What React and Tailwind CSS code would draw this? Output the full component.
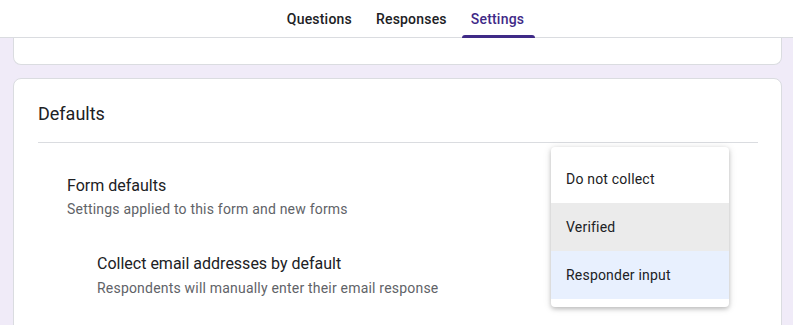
import React from "react";

const tabs = ["Questions", "Responses", "Settings"];
const options = [
  { label: "Do not collect", bg: "bg-white" },
  { label: "Verified", bg: "bg-[#ebebeb]" },
  { label: "Responder input", bg: "bg-[#e8f0fe]" },
];

export default function App() {
  return (
    <div
      className="relative h-[325px] w-[793px] overflow-hidden bg-[#f0ebf8]"
      style={{ fontFamily: "Roboto, 'Liberation Sans', sans-serif" }}
    >
      {/* top tab bar */}
      <div className="flex h-[38px] justify-center border-b border-[#dadce0] bg-white">
        <div className="ml-[18px] flex h-full items-stretch">
          {tabs.map((t) => {
            const active = t === "Settings";
            return (
              <div key={t} className="relative flex items-center px-[12px] pt-[2px]">
                <span
                  className={
                    active
                      ? "text-[14px] font-medium tracking-[0.2px] text-[#3f2a87]"
                      : "text-[14px] font-medium tracking-[0.2px] text-[#202124]"
                  }
                >
                  {t}
                </span>
                {active && (
                  <div className="absolute bottom-[-1px] left-[3px] right-[1px] h-[3px] rounded-t-[3px] bg-[#3f2a87]" />
                )}
              </div>
            );
          })}
        </div>
      </div>

      <div className="pl-[13px] pr-[11px]">
        {/* previous card, scrolled off the top */}
        <div className="h-[27px] rounded-b-[8px] border border-t-0 border-[#dadce0] bg-white" />

        {/* Defaults card */}
        <div className="mt-[13px] h-[300px] rounded-[8px] border border-[#dadce0] bg-white pl-[24px] pr-[23px] pt-[23px]">
          <h2 className="text-[18px] leading-[24px] text-[#202124]">Defaults</h2>
          <div className="mt-[16px] h-px bg-[#dadce0]" />

          <div className="pl-[29px] pt-[31px]">
            <div className="text-[16px] leading-[24px] text-[#202124]">Form defaults</div>
            <div className="mt-[1px] text-[14px] leading-[20px] tracking-[0.2px] text-[#5f6368]">
              Settings applied to this form and new forms
            </div>

            <div className="pl-[30px] pt-[33px]">
              <div className="text-[16px] leading-[24px] text-[#202124]">
                Collect email addresses by default
              </div>
              <div className="mt-[2px] text-[14px] leading-[20px] tracking-[0.2px] text-[#5f6368]">
                Respondents will manually enter their email response
              </div>
            </div>
          </div>
        </div>
      </div>

      {/* open select menu */}
      <div className="absolute left-[551px] top-[147px] w-[178px] rounded-[4px] bg-white py-[8px] shadow-[0_2px_4px_rgba(0,0,0,0.2),0_1px_8px_rgba(0,0,0,0.12)]">
        {options.map((o) => (
          <div
            key={o.label}
            className={`flex h-[48px] items-center px-[15px] text-[14px] tracking-[0.2px] text-[#202124] ${o.bg}`}
          >
            {o.label}
          </div>
        ))}
      </div>
    </div>
  );
}
